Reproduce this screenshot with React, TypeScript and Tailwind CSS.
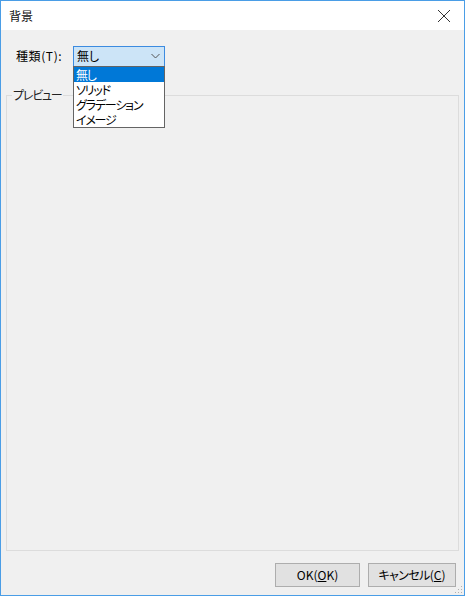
import React from "react";

const font = { fontFamily: '"Noto Sans CJK JP", "Noto Sans", sans-serif', fontFeatureSettings: '"palt"' };

export default function App() {
  return (
    <div
      className="w-[465px] h-[596px] border border-[#4a9de6] bg-[#f0f0f0] flex flex-col text-[12px] text-black relative overflow-hidden"
      style={font}
    >
      {/* title bar */}
      <div className="h-[29px] bg-white flex items-center justify-between pl-[8px] pr-[9px] shrink-0">
        <span className="text-[12px] leading-none text-[#111]">背景</span>
        <svg width="14" height="14" viewBox="0 0 14 14" className="mr-[4px]">
          <path d="M1 1 L13 13 M13 1 L1 13" stroke="#333" strokeWidth="1" fill="none" />
        </svg>
      </div>

      {/* body */}
      <div className="flex-1 flex flex-col px-[5px] relative">
        {/* type row */}
        <div className="flex items-center h-[20px] mt-[16px] pl-[10px]">
          <span className="w-[57px] leading-none tracking-[0.6px]">種類(T):</span>
          <div className="w-[92px] h-[21px] border border-[#3c8be0] bg-[#cce4f7] flex items-center justify-between pl-[3px] pr-[4px]">
            <span className="leading-none">無し</span>
            <svg width="9" height="6" viewBox="0 0 9 6">
              <path d="M0.5 1 L4.5 5 L8.5 1" stroke="#555" strokeWidth="1" fill="none" />
            </svg>
          </div>
        </div>

        {/* group box */}
        <div className="mt-[29px] flex-1 border border-[#dcdcdc] mb-[12px] relative">
          <span className="absolute -top-[7px] left-[5px] bg-[#f0f0f0] px-[1px] leading-none tracking-[-1.2px] text-[#222]">プレビュー</span>
        </div>

        {/* buttons */}
        <div className="flex justify-end gap-[8px] pr-[3px] pb-[8px]">
          <button className="w-[85px] h-[24px] bg-[#e1e1e1] border border-[#adadad] flex items-center justify-center leading-none">
            OK(<span className="underline">O</span>K)
          </button>
          <button className="w-[88px] h-[24px] bg-[#e1e1e1] border border-[#adadad] flex items-center justify-center leading-none">
            <span className="tracking-[-0.6px]">キャンセル</span>(<span className="underline">C</span>)
          </button>
        </div>

        {/* dropdown list */}
        <div className="absolute left-[72px] top-[36px] w-[92px] border border-[#646464] bg-white flex flex-col tracking-[-1.2px]">
          <div className="h-[15px] bg-[#0078d7] text-white flex items-center pl-[2px] leading-none">無し</div>
          <div className="h-[15px] flex items-center pl-[2px] leading-none">ソリッド</div>
          <div className="h-[15px] flex items-center pl-[2px] leading-none">グラデーション</div>
          <div className="h-[15px] flex items-center pl-[2px] leading-none">イメージ</div>
        </div>

        {/* resize grip */}
        <svg width="8" height="8" viewBox="0 0 8 8" className="absolute right-[1px] bottom-[1px]">
          <rect x="6" y="0" width="1" height="1" fill="#b0b0b0" />
          <rect x="3" y="3" width="1" height="1" fill="#b0b0b0" />
          <rect x="6" y="3" width="1" height="1" fill="#b0b0b0" />
          <rect x="0" y="6" width="1" height="1" fill="#b0b0b0" />
          <rect x="3" y="6" width="1" height="1" fill="#b0b0b0" />
          <rect x="6" y="6" width="1" height="1" fill="#b0b0b0" />
        </svg>
      </div>
    </div>
  );
}
